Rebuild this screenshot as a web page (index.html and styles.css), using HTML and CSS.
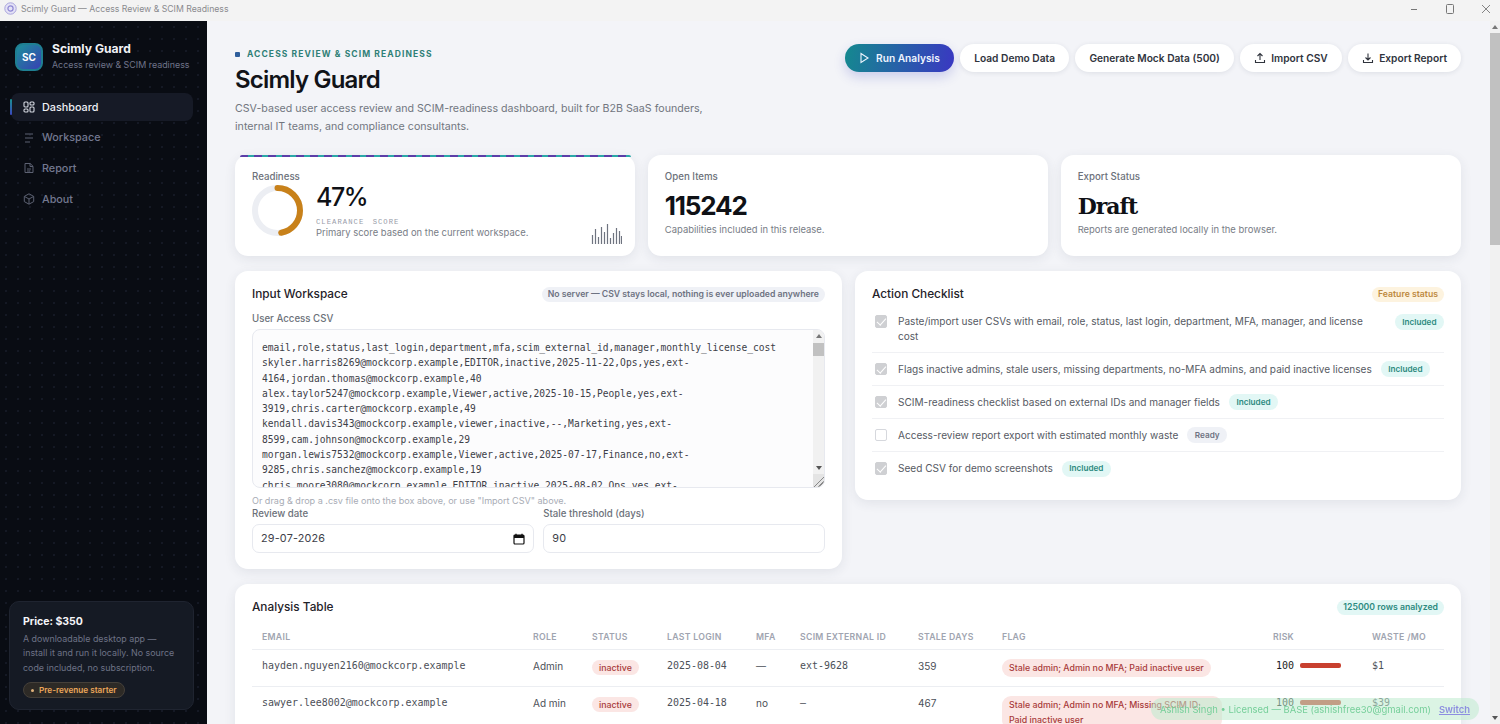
FILE: index.html
```html
<!DOCTYPE html>
<html lang="en">
<head>
<meta charset="utf-8">
<title>Scimly Guard — Access Review &amp; SCIM Readiness</title>
<link rel="stylesheet" href="styles.css">
</head>
<body>
<header class="titlebar">
  <div class="titlebar-left">
    <svg class="app-icon" width="13" height="13" viewBox="0 0 13 13" fill="none"><circle cx="6.5" cy="6.5" r="5.7" fill="#e4e2f6" stroke="#a9a4dd"/><circle cx="6.5" cy="6.5" r="2.6" stroke="#8f88d4" stroke-width="1.2"/></svg>
    <span>Scimly Guard — Access Review &amp; SCIM Readiness</span>
  </div>
  <div class="window-controls">
    <svg width="10" height="10" viewBox="0 0 10 10"><path d="M2 5.5h6" stroke="#777" stroke-width="1"/></svg>
    <svg width="10" height="10" viewBox="0 0 10 10" fill="none"><rect x="1.5" y="0.5" width="7" height="9" rx="1" stroke="#777"/></svg>
    <svg width="10" height="10" viewBox="0 0 10 10"><path d="M1 1l8 8M9 1l-8 8" stroke="#777" stroke-width="0.9"/></svg>
  </div>
</header>
<div class="app">
  <aside class="sidebar">
    <div class="brand">
      <div class="logo">SC</div>
      <div class="brand-text">
        <div class="brand-name">Scimly Guard</div>
        <div class="brand-sub">Access review &amp; SCIM readiness</div>
      </div>
    </div>
    <nav class="nav">
      <a class="nav-item active">
        <svg width="12" height="12" viewBox="0 0 12 12" fill="none" stroke="currentColor" stroke-width="1.1"><rect x="1" y="1" width="4" height="5" rx="1"/><rect x="7" y="1" width="4" height="3" rx="1"/><rect x="1" y="8" width="4" height="3" rx="1"/><rect x="7" y="6" width="4" height="5" rx="1"/></svg>
        <span>Dashboard</span>
      </a>
      <a class="nav-item">
        <svg width="12" height="12" viewBox="0 0 12 12" fill="none" stroke="currentColor" stroke-width="1"><path d="M2 2h8M2 6h8M2 10h5"/></svg>
        <span>Workspace</span>
      </a>
      <a class="nav-item">
        <svg width="12" height="12" viewBox="0 0 12 12" fill="none" stroke="currentColor" stroke-width="1"><path d="M2 1.5h5.2L10 4.3V10.5H2z"/><path d="M7 1.5v3h3M4 7h4M4 9h3"/></svg>
        <span>Report</span>
      </a>
      <a class="nav-item">
        <svg width="12" height="12" viewBox="0 0 12 12" fill="none" stroke="currentColor" stroke-width="1"><path d="M6 .8l4.7 2.6v5.2L6 11.2 1.3 8.6V3.4z"/><path d="M1.5 3.5L6 6l4.5-2.5M6 6v5"/></svg>
        <span>About</span>
      </a>
    </nav>
    <div class="price-card">
      <div class="price-title">Price: $350</div>
      <p class="price-text">A downloadable desktop app — install it and run it locally. No source code included, no subscription.</p>
      <span class="price-chip"><i class="chip-dot"></i>Pre-revenue starter</span>
    </div>
  </aside>
  <main class="main">
    <section class="hero">
      <div class="hero-copy">
        <div class="eyebrow"><i class="eyebrow-dot"></i>ACCESS REVIEW &amp; SCIM READINESS</div>
        <h1 class="page-title">Scimly Guard</h1>
        <p class="page-desc">CSV-based user access review and SCIM-readiness dashboard, built for B2B SaaS founders, internal IT teams, and compliance consultants.</p>
      </div>
      <div class="actions">
        <button class="btn btn-primary"><svg width="11" height="12" viewBox="0 0 11 12" fill="none" stroke="currentColor" stroke-width="1.1"><path d="M2 1.5l7 4.5-7 4.5z"/></svg>Run Analysis</button>
        <button class="btn">Load Demo Data</button>
        <button class="btn">Generate Mock Data (500)</button>
        <button class="btn"><svg width="12" height="12" viewBox="0 0 12 12" fill="none" stroke="currentColor" stroke-width="1.1"><path d="M6 8V1.5M3.5 4L6 1.5 8.500 4M1.500 8v2.500h9V8"/></svg>Import CSV</button>
        <button class="btn"><svg width="12" height="12" viewBox="0 0 12 12" fill="none" stroke="currentColor" stroke-width="1.1"><path d="M6 1.500V8M3.500 5.500L6 8l2.500-2.500M1.500 8v2.500h9V8"/></svg>Export Report</button>
      </div>
    </section>

    <section class="stats">
      <article class="card stat stat-readiness">
        <i class="stat-stripe"></i>
        <div class="stat-label">Readiness</div>
        <div class="readiness-row">
          <svg class="donut" width="51" height="51" viewBox="0 0 51 51" fill="none">
            <circle cx="25.500" cy="25.500" r="22.500" stroke="#eceef3" stroke-width="6"/>
            <circle class="donut-arc" cx="25.500" cy="25.500" r="22.500" stroke="#c8811a" stroke-width="6" stroke-linecap="round" stroke-dasharray="66.400 141.400"/>
          </svg>
          <div class="readiness-copy">
            <div class="stat-value">47%</div>
            <div class="stat-caption">CLEARANCE SCORE</div>
            <div class="stat-note stat-note-tight">Primary score based on the current workspace.</div>
          </div>
        </div>
        <svg class="spark" width="31" height="22" viewBox="0 0 31 22" stroke="#6f7480" stroke-width="1.200"><path d="M1.500 21V12M4.500 21V6M7.500 21V14M10.500 21V4M13.500 21V9M16.500 21V1M19.500 21V15M22.500 21V10M25.500 21V5M28.500 21V8M30.500 21V13"/></svg>
      </article>
      <article class="card stat">
        <div class="stat-label">Open Items</div>
        <div class="stat-value stat-value-big">115242</div>
        <div class="stat-note">Capabilities included in this release.</div>
      </article>
      <article class="card stat">
        <div class="stat-label">Export Status</div>
        <div class="stat-value stat-value-slab">Draft</div>
        <div class="stat-note">Reports are generated locally in the browser.</div>
      </article>
    </section>

    <section class="columns">
      <article class="card panel">
        <div class="panel-head">
          <h2 class="panel-title">Input Workspace</h2>
          <span class="pill pill-grey">No server — CSV stays local, nothing is ever uploaded anywhere</span>
        </div>
        <label class="field-label">User Access CSV</label>
        <div class="csv-wrap">
          <textarea class="csv" spellcheck="false">email,role,status,last_login,department,mfa,scim_external_id,manager,monthly_license_cost
skyler.harris8269@mockcorp.example,EDITOR,inactive,2025-11-22,Ops,yes,ext-4164,jordan.thomas@mockcorp.example,40
alex.taylor5247@mockcorp.example,Viewer,active,2025-10-15,People,yes,ext-3919,chris.carter@mockcorp.example,49
kendall.davis343@mockcorp.example,viewer,inactive,--,Marketing,yes,ext-8599,cam.johnson@mockcorp.example,29
morgan.lewis7532@mockcorp.example,Viewer,active,2025-07-17,Finance,no,ext-9285,chris.sanchez@mockcorp.example,19
chris.moore3080@mockcorp.example,EDITOR,inactive,2025-08-02,Ops,yes,ext-7710,jordan.thomas@mockcorp.example,40</textarea>
          <div class="csv-scroll">
            <i class="arrow-up"></i>
            <i class="csv-thumb"></i>
            <i class="arrow-down"></i>
            <i class="csv-grip"></i>
          </div>
        </div>
        <div class="hint">Or drag &amp; drop a .csv file onto the box above, or use "Import CSV" above.</div>
        <div class="field-row">
          <div class="field">
            <label class="field-label field-label-tight">Review date</label>
            <div class="input input-date"><span>29-07-2026</span>
              <svg width="12" height="12" viewBox="0 0 12 12"><path d="M3 .8v2M9 .8v2" stroke="#111" stroke-width="1.300"/><rect x="1" y="2" width="10" height="9" rx="1" fill="none" stroke="#111" stroke-width="1.200"/><rect x="1" y="2" width="10" height="3" fill="#111"/></svg>
            </div>
          </div>
          <div class="field">
            <label class="field-label field-label-tight">Stale threshold (days)</label>
            <div class="input">90</div>
          </div>
        </div>
      </article>

      <article class="card panel panel-checklist">
        <div class="panel-head panel-head-check">
          <h2 class="panel-title">Action Checklist</h2>
          <span class="pill pill-amber">Feature status</span>
        </div>
        <ul class="checklist">
          <li class="check-row check-row-wrap"><i class="box box-on"></i><span class="check-text">Paste/import user CSVs with email, role, status, last login, department, MFA, manager, and license cost</span><span class="pill pill-teal">Included</span></li>
          <li class="check-row"><i class="box box-on"></i><span>Flags inactive admins, stale users, missing departments, no-MFA admins, and paid inactive licenses</span><span class="pill pill-teal">Included</span></li>
          <li class="check-row"><i class="box box-on"></i><span>SCIM-readiness checklist based on external IDs and manager fields</span><span class="pill pill-teal">Included</span></li>
          <li class="check-row"><i class="box"></i><span>Access-review report export with estimated monthly waste</span><span class="pill pill-grey">Ready</span></li>
          <li class="check-row"><i class="box box-on"></i><span>Seed CSV for demo screenshots</span><span class="pill pill-teal">Included</span></li>
        </ul>
      </article>
    </section>

    <section class="card table-card">
      <div class="panel-head table-head">
        <h2 class="panel-title">Analysis Table</h2>
        <span class="pill pill-teal pill-big">125000 rows analyzed</span>
      </div>
      <table class="table">
        <thead>
          <tr><th>EMAIL</th><th>ROLE</th><th>STATUS</th><th>LAST LOGIN</th><th>MFA</th><th>SCIM EXTERNAL ID</th><th>STALE DAYS</th><th>FLAG</th><th>RISK</th><th>WASTE /MO</th></tr>
        </thead>
        <tbody>
          <tr>
            <td class="mono">hayden.nguyen2160@mockcorp.example</td><td>Admin</td><td><span class="tag">inactive</span></td><td class="mono">2025-08-04</td><td>—</td><td class="mono">ext-9628</td><td>359</td>
            <td><span class="flag">Stale admin; Admin no MFA; Paid inactive user</span></td>
            <td><div class="risk"><span class="mono risk-num">100</span><i class="risk-bar"></i></div></td><td class="mono">$1</td>
          </tr>
          <tr>
            <td class="mono">sawyer.lee8002@mockcorp.example</td><td>Ad min</td><td><span class="tag">inactive</span></td><td class="mono">2025-04-18</td><td>no</td><td class="mono">—</td><td>467</td>
            <td><span class="flag">Stale admin; Admin no MFA; Missing SCIM ID; Paid inactive user</span></td>
            <td><div class="risk"><span class="mono risk-num">100</span><i class="risk-bar"></i></div></td><td class="mono">$39</td>
          </tr>
        </tbody>
      </table>
    </section>
    <div class="toast"><span>Ashish Singh • Licensed — BASE (ashishfree30@gmail.com)</span><a class="toast-link">Switch</a></div>
  </main>
  <div class="page-scroll">
    <i class="arrow-up"></i>
    <i class="page-thumb"></i>
    <i class="arrow-down"></i>
  </div>
</div>
</body>
</html>
```
FILE: styles.css
```css
* { box-sizing: border-box; }
html, body { margin: 0; height: 100%; overflow: hidden; }
body {
  font-family: Inter, "Liberation Sans", sans-serif;
  color: #14161c;
  background: #f3f4f8;
  display: flex;
  flex-direction: column;
}
.titlebar {
  height: 21px;
  flex: none;
  display: flex;
  align-items: center;
  justify-content: space-between;
  background: #f3f3f3;
  font-size: 8.700px;
  color: #8a8a8e;
  padding: 0 0 0 4px;
}
.titlebar-left { display: flex; align-items: center; gap: 4px; margin-top: -4px; }
.window-controls { display: flex; gap: 26px; padding-right: 9px; margin-top: -4px; }
.app { flex: 1; display: flex; min-height: 0; }

.sidebar {
  width: 207px;
  flex: none;
  display: flex;
  flex-direction: column;
  padding: 20px 14px 14px 10px;
  background-color: #090c13;
  background-image: radial-gradient(circle, #151925 0.7px, transparent 1px);
  background-size: 12px 12px;
}
.brand { display: flex; align-items: center; gap: 9px; padding-left: 5px; }
.logo {
  width: 28px;
  height: 28px;
  border-radius: 8px;
  background: linear-gradient(135deg, #1c8f99, #3840b4);
  border: 2px solid #1f7f92;
  color: #fff;
  font-size: 10px;
  font-weight: 700;
  display: flex;
  align-items: center;
  justify-content: center;
}
.brand-name { font-size: 12.100px; font-weight: 700; color: #f1f2f6; line-height: 15px; }
.brand-sub { font-size: 8.900px; color: #70758a; line-height: 15px; margin-top: 1px; }
.nav { display: flex; flex-direction: column; gap: 2.700px; margin-top: 21px; }
.nav-item {
  position: relative;
  height: 28px;
  display: flex;
  align-items: center;
  gap: 7px;
  padding-left: 12px;
  margin-left: 1px;
  border-radius: 8px;
  font-size: 10.800px;
  font-weight: 500;
  color: #737890;
}
.nav-item svg { color: #5c6172; }
.nav-item.active { background: #161a26; color: #eef0f5; }
.nav-item.active svg { color: #d6d9e2; }
.nav-item.active::before {
  content: "";
  position: absolute;
  left: -1px;
  top: 6px;
  width: 2px;
  height: 16px;
  border-radius: 2px;
  background: linear-gradient(#19908f, #3b46c0);
}
.price-card {
  margin-top: auto;
  margin-left: -1px;
  margin-right: 1px;
  width: 185px;
  padding: 13px 13px 11px;
  background: #151a24;
  border: 1px solid #1f2430;
  border-radius: 10px;
}
.price-title { font-size: 10.500px; font-weight: 700; color: #f5f6f9; line-height: 14px; }
.price-text { margin: 3px 0 0; font-size: 8.900px; line-height: 14.300px; color: #6e7386; }
.price-chip {
  display: inline-flex;
  align-items: center;
  gap: 5px;
  margin-top: 7px;
  height: 16px;
  padding: 0 7px;
  border-radius: 8px;
  background: #2d2a26;
  border: 1px solid #45403a;
  color: #eba65a;
  font-size: 8.200px;
  font-weight: 600;
}
.chip-dot { width: 3px; height: 3px; border-radius: 50%; background: #e0b27a; }

.main {
  flex: 1;
  min-width: 0;
  overflow-y: hidden;
  padding: 23px 29px 28px 28px;
  background: #f3f4f8;
}
.page-scroll {
  position: relative;
  flex: none;
  width: 10px;
  background: #f1f1f1;
}
.page-thumb {
  position: absolute;
  left: 0;
  right: 0;
  top: 12px;
  height: 212px;
  background: #c1c1c1;
}
.arrow-up, .arrow-down {
  position: absolute;
  left: 2px;
  width: 0;
  height: 0;
  border-left: 3px solid transparent;
  border-right: 3px solid transparent;
}
.arrow-up { top: 4px; border-bottom: 4px solid #777; }
.arrow-down { bottom: 4px; border-top: 4px solid #555; }
.hero { display: flex; justify-content: space-between; align-items: flex-start; }
.hero-copy { width: 490px; }
.eyebrow {
  display: flex;
  align-items: center;
  gap: 7px;
  font-size: 8.500px;
  font-weight: 700;
  letter-spacing: 1.100px;
  color: #2f8077;
  line-height: 20px;
}
.eyebrow-dot { width: 5px; height: 5px; border-radius: 1px; background: #2f5e9c; }
.page-title { margin: 1px 0 0; font-size: 24px; font-weight: 600; line-height: 30px; letter-spacing: -0.800px; color: #111318; }
.page-desc { margin: 5px 0 0; font-size: 10.660px; line-height: 18px; color: #71767f; }
.actions { display: flex; gap: 6.400px; }
.btn {
  height: 28px;
  display: inline-flex;
  align-items: center;
  gap: 5px;
  padding: 0 14px;
  border: 0;
  border-radius: 14px;
  background: #fff;
  box-shadow: 0 1px 5px rgba(30, 40, 70, .1);
  font-family: inherit;
  font-size: 10.200px;
  font-weight: 600;
  color: #30343d;
}
.btn-primary {
  background: linear-gradient(100deg, #14898f, #3a37c2);
  color: #eef4ff;
  gap: 6px;
  padding: 0 14px;
  box-shadow: 0 5px 12px rgba(60, 70, 190, .22);
}
.card {
  background: #fff;
  border-radius: 13px;
  box-shadow: 0 3px 12px rgba(40, 50, 80, .09);
}
.stats { display: grid; grid-template-columns: repeat(3, 1fr); gap: 12.500px; margin-top: 19px; }
.stat { position: relative; height: 101px; padding: 16px 17px; }
.stat-stripe {
  position: absolute;
  left: 5px;
  right: 4px;
  top: 0;
  height: 2px;
  background: repeating-linear-gradient(90deg, #5b3ea8 0 8px, #2aa8a8 8px 14px);
  border-radius: 2px 2px 0 0;
}
.stat-label { font-size: 9.700px; font-weight: 500; color: #6c717a; line-height: 12px; }
.readiness-row { display: flex; gap: 13px; margin-top: 2px; }
.donut-arc { transform: rotate(-90deg); transform-origin: center; }
.readiness-copy { margin-top: -3px; }
.stat-value { font-size: 25px; font-weight: 500; line-height: 30px; color: #0f1116; letter-spacing: -1.500px; }
.stat-caption { font-family: "Liberation Mono", monospace; font-size: 7.200px; letter-spacing: 1.050px; color: #989ca8; margin-top: 6px; line-height: 9px; word-spacing: 3px; }
.stat-note { font-size: 9.450px; color: #787d86; line-height: 14px; margin-top: 2px; }
.stat-note-tight { margin-top: -1px; }
.stat-value-big { font-weight: 700; font-size: 26px; line-height: 30px; margin-top: 8px; letter-spacing: -1.200px; }
.stat-value-slab { font-family: "DejaVu Serif", serif; font-weight: 700; font-size: 22px; line-height: 30px; margin-top: 8px; letter-spacing: -1px; }
.spark { position: absolute; right: 13px; bottom: 11px; }

.columns { display: grid; grid-template-columns: 607px 606px; gap: 13px; align-items: start; margin-top: 15px; }
.panel { padding: 15px 17px 16px; height: 298px; }
.panel-checklist { height: 229px; }
.panel-head { display: flex; align-items: center; justify-content: space-between; height: 16px; }
.panel-title { margin: 0; font-size: 11.800px; font-weight: 500; color: #1f2229; }
.pill {
  display: inline-flex;
  align-items: center;
  flex: none;
  height: 16px;
  padding: 0 7.500px;
  border-radius: 8px;
  font-size: 8.200px;
  font-weight: 600;
}
.panel-head .pill { height: 15px; font-size: 8.700px; padding: 0 6px; }
.pill-grey { background: #eff1f6; color: #6e7382; }
.pill-amber { background: #fdf3df; color: #bd8a3f; }
.pill-teal { background: #e2f7f5; color: #2c8a80; }
.field-label { display: block; font-size: 9.700px; font-weight: 500; color: #6c717a; margin-top: 10px; line-height: 13px; }
.field-label-tight { margin-top: 0; }
.csv-wrap { position: relative; margin-top: 4px; height: 159px; }
.csv {
  display: block;
  width: 100%;
  height: 159px;
  padding: 10px 20px 0 9px;
  border: 1px solid #e7e9ef;
  border-radius: 8px;
  background: #fcfcfd;
  font-family: "DejaVu Sans Mono", monospace;
  font-size: 9.600px;
  line-height: 15.300px;
  color: #3d4048;
  overflow: hidden;
  resize: none;
  white-space: pre-wrap;
  outline: 0;
}
.csv-scroll {
  position: absolute;
  right: 1px;
  top: 1px;
  bottom: 1px;
  width: 11px;
  background: #f1f1f1;
  border-radius: 0 7px 7px 0;
  overflow: hidden;
}
.csv-scroll .arrow-up { left: 2.500px; top: 4px; }
.csv-scroll .arrow-down { left: 2.500px; bottom: 17px; }
.csv-thumb {
  position: absolute;
  left: 0;
  right: 0;
  top: 13px;
  height: 13px;
  background: #c1c1c1;
}
.csv-grip {
  position: absolute;
  left: 0;
  right: 0;
  bottom: 0;
  height: 13px;
  background:
    linear-gradient(135deg, transparent 55%, #888 55% 62%, transparent 62% 75%, #888 75% 82%, transparent 82%),
    #e4e4e4;
}
.hint { font-size: 9.050px; color: #a8acb5; line-height: 11px; margin-top: 7px; }
.field-row { display: grid; grid-template-columns: 1fr 1fr; gap: 9.500px; margin-top: 1px; }
.input {
  height: 29px;
  margin-top: 4px;
  padding: 0 8px;
  display: flex;
  align-items: center;
  justify-content: space-between;
  border: 1px solid #e7e9ef;
  border-radius: 7px;
  background: #fff;
  font-size: 10.800px;
  letter-spacing: .2px;
  color: #3d4048;
}
.panel-head-check { margin-bottom: 3px; }
.checklist { list-style: none; margin: 0; padding: 0; }
.check-row {
  display: flex;
  align-items: center;
  gap: 11px;
  min-height: 33px;
  padding: 0 0 0 2.500px;
  border-bottom: 1px solid #f0f1f4;
  font-size: 10.070px;
  color: #565a63;
  line-height: 15px;
}
.check-row:last-child { border-bottom: 0; }
.check-row .pill { margin-left: -2px; }
.check-row-wrap { align-items: flex-start; padding-top: 9px; min-height: 48px; }
.check-text { flex: 1; margin-right: 12px; }
.box {
  flex: none;
  position: relative;
  width: 12.500px;
  height: 12.500px;
  border: 1px solid #d6d8dd;
  border-radius: 2px;
  background: #fff;
}
.check-row-wrap .box { margin-top: 1px; }
.box-on { background: #cfd0d3; border-color: #cfd0d3; }
.box-on::after {
  content: "";
  position: absolute;
  left: 3.500px;
  top: 0;
  width: 3.500px;
  height: 8px;
  border: solid #fff;
  border-width: 0 1.300px 1.300px 0;
  transform: rotate(42deg);
}
.table-card { margin-top: 15px; padding: 15px 17px 30px; }
.table-head { margin-bottom: 10px; }
.table { width: 100%; table-layout: fixed; border-collapse: collapse; }
.table th {
  height: 24px;
  text-align: left;
  padding: 0 0 0 10px;
  font-size: 8.700px;
  font-weight: 600;
  letter-spacing: .3px;
  color: #a0a4b0;
  border-bottom: 1px solid #eceef2;
  white-space: nowrap;
  overflow: visible;
}
.table th:nth-child(1) { width: 271px; }
.table th:nth-child(2) { width: 59px; }
.table th:nth-child(3) { width: 75px; }
.table th:nth-child(4) { width: 89px; }
.table th:nth-child(5) { width: 44px; }
.table th:nth-child(6) { width: 118px; }
.table th:nth-child(7) { width: 84px; }
.table th:nth-child(8) { width: 271px; }
.table th:nth-child(9) { width: 99px; }
.table td {
  height: 37px;
  padding: 10px 0 0 10px;
  vertical-align: top;
  font-size: 10px;
  line-height: 12px;
  color: #4c5058;
  border-bottom: 1px solid #eceef2;
}
.table td.mono, .mono { font-family: "DejaVu Sans Mono", monospace; font-size: 9.950px; }
.tag, .flag {
  display: inline-block;
  vertical-align: top;
  background: #fbe6e4;
  color: #a83a3a;
  font-size: 8.800px;
  font-weight: 500;
}
.tag { border-radius: 8px; padding: 0 7px; line-height: 15px; }
.flag { max-width: 220px; margin-top: -1px; line-height: 15px; padding: 1.500px 7px; border-radius: 9px; }
.risk { display: flex; align-items: center; gap: 6px; }
.risk-num { color: #1a1c22; margin-left: 3px; font-size: 10px; }
.risk-bar { width: 41px; height: 4.500px; border-radius: 2px; background: #c8402f; }
.toast {
  position: fixed;
  right: 21px;
  bottom: 4px;
  height: 22px;
  display: flex;
  align-items: center;
  gap: 8px;
  padding: 0 9px;
  border-radius: 11px;
  background: rgba(190, 235, 205, .55);
  color: #76cf9a;
  font-size: 9.450px;
  white-space: nowrap;
}
.toast-link { color: #8d8ee0; text-decoration: underline; font-weight: 600; }
```
